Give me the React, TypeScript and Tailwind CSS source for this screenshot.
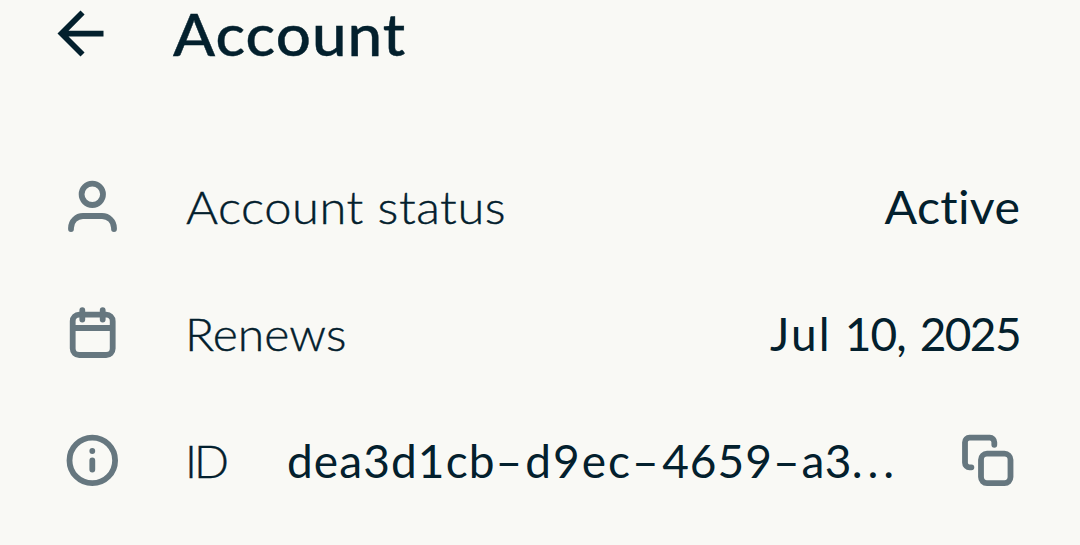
import type { ReactNode } from "react";

const icon = "block size-16 shrink-0 fill-none stroke-[#66777f] stroke-[5.8]";
const label = "-mt-px origin-left font-light [-webkit-text-stroke:0.4px_#03202d]";

function UserIcon() {
  return (
    <svg viewBox="0 0 64 64" className={icon} strokeLinecap="round">
      <circle cx="32.3" cy="18.3" r="10.7" />
      <path d="M11 53v-1a12 12 0 0 1 12-12h19a12 12 0 0 1 12 12v1" />
    </svg>
  );
}

function CalendarIcon() {
  return (
    <svg viewBox="0 0 64 64" className={icon} strokeLinecap="round">
      <rect x="12.7" y="11.7" width="40" height="40.3" rx="6.5" />
      <path d="M22.3 7.2v9.3M42.7 7.2v9.3" />
      <path d="M12.7 25h40" strokeLinecap="butt" />
    </svg>
  );
}

function InfoIcon() {
  return (
    <svg viewBox="0 0 64 64" className={icon} strokeLinecap="round">
      <circle cx="32.3" cy="30.4" r="22.8" />
      <path d="M32.3 21v.01M32.3 30.5v9" />
    </svg>
  );
}

function CopyIcon() {
  return (
    <svg viewBox="0 0 64 64" className={icon} strokeLinecap="round">
      <rect x="25" y="23.7" width="29.5" height="29.4" rx="6" />
      <path d="M38.3 14.8v-2.6a4.5 4.5 0 0 0-4.5-4.5H13.5A4.5 4.5 0 0 0 9 12.2v20.6a4.5 4.5 0 0 0 4.5 4.5h1.9" />
    </svg>
  );
}

function Row({ glyph, children }: { glyph: ReactNode; children: ReactNode }) {
  return (
    <li className="flex h-[127px] items-center pr-[60px] pl-[60px]">
      {glyph}
      {children}
    </li>
  );
}

export default function App() {
  return (
    <main className="h-[545px] w-[1080px] overflow-hidden bg-[#f9f9f5] font-['Lato','Liberation_Sans',sans-serif] text-[46px] leading-[64px] whitespace-nowrap text-[#03202d] [font-variant-ligatures:none]">
      <header className="flex h-[144px] items-start pl-[46px]">
        <svg viewBox="0 0 24 24" className="-mt-px size-[69px] shrink-0 fill-[#03202d]">
          <path d="M20 11H7.83l5.59-5.59L12 4l-8 8 8 8 1.41-1.41L7.83 13H20v-2z" />
        </svg>
        <h1 className="ml-[58px] origin-left scale-x-[1.085] text-[57px] leading-[68px] font-medium tracking-[1px] [-webkit-text-stroke:0.4px_#03202d]">
          Account
        </h1>
      </header>
      <ul>
        <Row glyph={<UserIcon />}>
          <span className={`${label} ml-[62px] scale-x-[1.063] tracking-[0.5px]`}>Account status</span>
          <span className="-mt-px ml-auto origin-right scale-x-[1.05] tracking-[0.3px]">Active</span>
        </Row>
        <Row glyph={<CalendarIcon />}>
          <span className={`${label} ml-[61px] scale-x-[1.046]`}>Renews</span>
          <span className="-mt-px ml-auto">
            <span className="tracking-[2.2px]">Jul</span>
            <span className="ml-[13px] tracking-[-1px]">10,</span>
            <span className="ml-[14px] tracking-[-1.6px]">2025</span>
          </span>
        </Row>
        <Row glyph={<InfoIcon />}>
          <span className={`${label} ml-[61px] w-[41px] tracking-[-3px]`}>ID</span>
          <span className="-mt-px ml-[61px]">
            <span className="tracking-[1.1px]">dea3d1cb</span>
            <span className="tracking-[3px]">–</span>
            <span className="tracking-[2px]">d9ec</span>
            <span className="tracking-[3.5px]">–</span>
            <span className="tracking-[1px]">4659</span>
            <span className="tracking-[2px]">–</span>
            <span className="tracking-[0.3px]">a3</span>
            <span className="tracking-[4.9px]">...</span>
          </span>
          <span className="ml-auto">
            <CopyIcon />
          </span>
        </Row>
      </ul>
    </main>
  );
}
